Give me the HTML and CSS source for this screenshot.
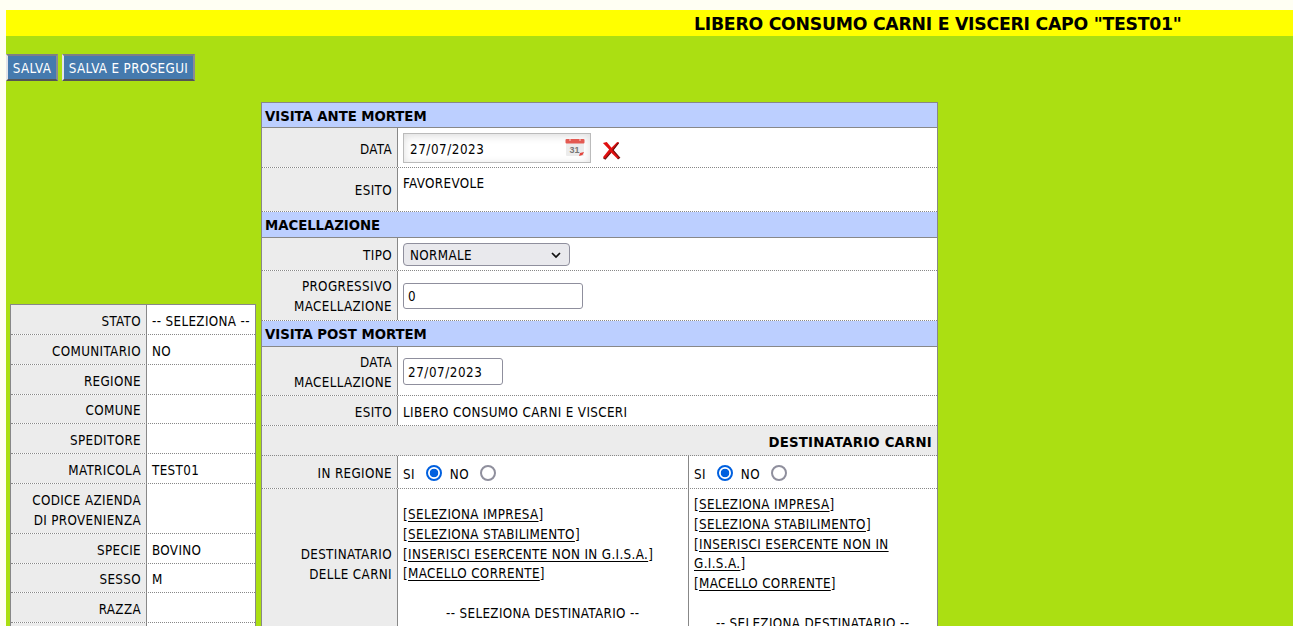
FILE: index.html
```html
<!DOCTYPE html>
<html lang="it">
<head>
<meta charset="utf-8">
<title>Libero consumo carni e visceri</title>
<link rel="stylesheet" href="styles.css">
</head>
<body>
<main class="page">
  <h1 class="title">LIBERO CONSUMO CARNI E VISCERI CAPO "TEST01"</h1>
  <div class="toolbar">
    <button class="btn save">SALVA</button>
    <button class="btn next">SALVA E PROSEGUI</button>
  </div>
  <div class="columns">
    <section class="sheet animal">
      <div class="row"><div class="label">STATO</div><div class="value"><span class="placeholder">-- SELEZIONA --</span></div></div>
      <div class="row"><div class="label">COMUNITARIO</div><div class="value">NO</div></div>
      <div class="row"><div class="label">REGIONE</div><div class="value"></div></div>
      <div class="row"><div class="label">COMUNE</div><div class="value"></div></div>
      <div class="row"><div class="label">SPEDITORE</div><div class="value"></div></div>
      <div class="row"><div class="label">MATRICOLA</div><div class="value">TEST01</div></div>
      <div class="row double"><div class="label">CODICE AZIENDA<br>DI PROVENIENZA</div><div class="value"></div></div>
      <div class="row"><div class="label">SPECIE</div><div class="value">BOVINO</div></div>
      <div class="row"><div class="label">SESSO</div><div class="value">M</div></div>
      <div class="row"><div class="label">RAZZA</div><div class="value"></div></div>
      <div class="row"><div class="label"></div><div class="value"></div></div>
    </section>
    <section class="sheet visit">
      <h2 class="heading first">VISITA ANTE MORTEM</h2>
      <div class="row ante-date">
        <div class="label">DATA</div>
        <div class="value">
          <div class="datebox"><span>27/07/2023</span>
            <svg class="calendar" viewBox="0 0 20 20"><rect x="1" y="2" width="18" height="16" rx="1" fill="#ececec"/><rect x=".5" y="1" width="19" height="4.6" rx="1" fill="#e35a52"/><path d="M5 1v2M15 1v2" stroke="#f5aaa5" stroke-width="1.5"/><text x="9.500" y="14.5" text-anchor="middle">31</text><path d="M14 18l1-3 4-1-1.500 3z" fill="#e3463e"/></svg>
          </div>
          <svg class="clear" viewBox="0 0 20 20"><path d="M1 2l4-1 5 6 6-6 2 .5-6 8 6.500 8-2 1.500-7-7-6 7-2.500-2 6.500-8z" fill="#e01010"/><path d="M17.500 2l-6 7.500 7 8-2 1.500M1.500 18l2 1 6-7" fill="none" stroke="#701010" stroke-width="1.200"/></svg>
        </div>
      </div>
      <div class="row ante-result"><div class="label">ESITO</div><div class="value">FAVOREVOLE</div></div>
      <h2 class="heading">MACELLAZIONE</h2>
      <div class="row kind">
        <div class="label">TIPO</div>
        <div class="value"><div class="select"><span>NORMALE</span><svg viewBox="0 0 10 7"><path d="M1 1l4 4 4-4" fill="none" stroke="#111" stroke-width="1.700"/></svg></div></div>
      </div>
      <div class="row progress"><div class="label">PROGRESSIVO<br>MACELLAZIONE</div><div class="value"><div class="input wide">0</div></div></div>
      <h2 class="heading">VISITA POST MORTEM</h2>
      <div class="row post-date"><div class="label">DATA<br>MACELLAZIONE</div><div class="value"><div class="input date">27/07/2023</div></div></div>
      <div class="row result"><div class="label">ESITO</div><div class="value">LIBERO CONSUMO CARNI E VISCERI</div></div>
      <div class="subheading">DESTINATARIO CARNI</div>
      <div class="row region">
        <div class="label">IN REGIONE</div>
        <div class="value left"><span>SI</span><i class="radio on"></i><span>NO</span><i class="radio"></i></div>
        <div class="value right"><span>SI</span><i class="radio on"></i><span>NO</span><i class="radio"></i></div>
      </div>
      <div class="row recipient">
        <div class="label">DESTINATARIO<br>DELLE CARNI</div>
        <div class="value left">
          <div>[<u>SELEZIONA IMPRESA</u>]<br>[<u>SELEZIONA STABILIMENTO</u>]<br>[<u>INSERISCI ESERCENTE NON IN G.I.S.A.</u>]<br>[<u>MACELLO CORRENTE</u>]</div>
          <div class="choice">-- SELEZIONA DESTINATARIO --</div>
        </div>
        <div class="value right">
          <div>[<u>SELEZIONA IMPRESA</u>]<br>[<u>SELEZIONA STABILIMENTO</u>]<br>[<u>INSERISCI ESERCENTE NON IN<br>G.I.S.A.</u>]<br>[<u>MACELLO CORRENTE</u>]</div>
          <div class="choice">-- SELEZIONA DESTINATARIO --</div>
        </div>
      </div>
    </section>
  </div>
</main>
</body>
</html>
```

FILE: styles.css
```css
* { box-sizing: border-box; }
html { height: 100%; overflow: hidden; }
body {
  margin: 0;
  height: 100%;
  overflow: hidden;
  padding: 10px 0 0 6px;
  background: #fffff3;
  color: #000;
  font: 13.300px/19.800px Tahoma, "DejaVu Sans Condensed", "DejaVu Sans", sans-serif;
  font-stretch: condensed;
  letter-spacing: .36px;
}
.page { height: 616px; overflow: hidden; background: #abdf12; }
.title, .heading, .subheading {
  font-family: Tahoma, "DejaVu Sans", sans-serif;
  font-stretch: normal;
  font-weight: bold;
}
.title {
  margin: 0;
  height: 26px;
  padding-left: 688px;
  background: #ff0;
  font-size: 17.300px;
  line-height: 28px;
  letter-spacing: -.25px;
  white-space: nowrap;
}
.toolbar { display: flex; gap: 4px; padding-top: 18px; height: 66px; }
.btn {
  height: 27px;
  padding: 2px 0 0;
  border: 2px solid;
  border-color: #7d7d86 #8b8b94 #555 #e4e4e8;
  background: #457aae;
  color: #fff;
  font: inherit;
  letter-spacing: inherit;
  white-space: nowrap;
}
.save { width: 52px; }
.next { width: 133px; }
.columns { display: flex; align-items: flex-start; gap: 5px; padding-left: 4px; }
.sheet { border: 1px solid #888; background: #fff; }
.animal { width: 246px; margin-top: 202px; }
.visit { width: 677px; }
.row { display: flex; height: 29.850px; border-bottom: 1px dotted #888; }
.double { height: 49.700px; }
.label {
  display: flex;
  align-items: center;
  justify-content: flex-end;
  flex: none;
  width: 136px;
  padding: 4px 5px 0 0;
  border-right: 1px solid #888;
  background: #ececec;
  text-align: right;
  white-space: nowrap;
}
.value { display: flex; align-items: center; flex: 1; padding: 4px 0 0 5px; white-space: nowrap; }
.animal .label, .animal .value { padding-top: 4.600px; }
.heading {
  margin: 0;
  height: 26px;
  padding-left: 3px;
  border-bottom: 1px solid #888;
  background: #bccfff;
  font-size: 13.300px;
  line-height: 28px;
  letter-spacing: -.05px;
}
.first { height: 25px; }
.ante-date { height: 40px; }
.ante-date .value { padding-top: 0; }
.datebox {
  display: flex;
  align-items: center;
  justify-content: space-between;
  width: 188px;
  height: 30px;
  margin-top: 1px;
  padding: 3px 5px 0 6px;
  border: 1px solid #bbb;
  background: #fff;
  box-shadow: inset 0 2px 9px #ddd;
  letter-spacing: .55px;
}
.calendar { width: 20px; height: 20px; margin-top: -4px; }
.calendar text { font: bold 9px "Liberation Sans", sans-serif; fill: #777; letter-spacing: 0; }
.clear { width: 19px; height: 19px; margin: 5px 0 0 11px; }
.ante-result { height: 44px; }
.ante-result .value { align-items: flex-start; padding-top: 6px; }
.ante-result .label { padding-top: 3px; }
.kind { height: 33px; }
.kind .label { padding-top: 3px; }
.kind .value { padding-top: 0; }
.select {
  display: flex;
  align-items: center;
  justify-content: space-between;
  width: 167px;
  height: 23px;
  padding: 3px 8px 0 6px;
  border: 1px solid #8f8f9d;
  border-radius: 4px;
  background: #e9e9ed;
}
.select svg { width: 10px; height: 7px; margin-top: -1px; }
.progress { height: 50px; }
.progress .label { padding-top: 3px; }
.input {
  height: 26px;
  padding: 1px 4px 0;
  border: 1px solid #8f8f9d;
  border-radius: 3px;
  background: #fff;
  line-height: 24px;
  letter-spacing: .55px;
}
.progress .value { padding-top: 1px; }
.wide { width: 180px; }
.date { width: 100px; height: 27px; padding-top: 2px; }
.post-date { height: 49px; }
.post-date .label { padding-top: 3px; }
.post-date .value { padding-top: 1px; }
.result { height: 30px; }
.subheading {
  height: 30px;
  padding: 1px 5px 0 0;
  border-bottom: 1px dotted #888;
  background: #ececec;
  line-height: 31px;
  letter-spacing: .2px;
  text-align: right;
}
.left { flex: none; width: 291px; border-right: 1px solid #888; }
.region { height: 33px; }
.region .label { padding-top: 3px; }
.region .value { padding-top: 5px; }
.radio { width: 16px; height: 16px; margin: -3px 8px 0 11px; border: 2px solid #8f8f9d; border-radius: 50%; background: #fff; }
.radio.on { border-color: #0060df; background: radial-gradient(circle, #0060df 4px, #fff 4.600px); }
.recipient { height: 149px; border-bottom: 0; }
.recipient .label { padding-top: 2px; }
.recipient .value { display: block; padding-top: 16px; }
.recipient .right { padding-top: 6px; }
.recipient u { text-underline-offset: 2px; }
.choice { padding: 20px 0 0 43px; }
.right .choice { padding-left: 22px; }
```
